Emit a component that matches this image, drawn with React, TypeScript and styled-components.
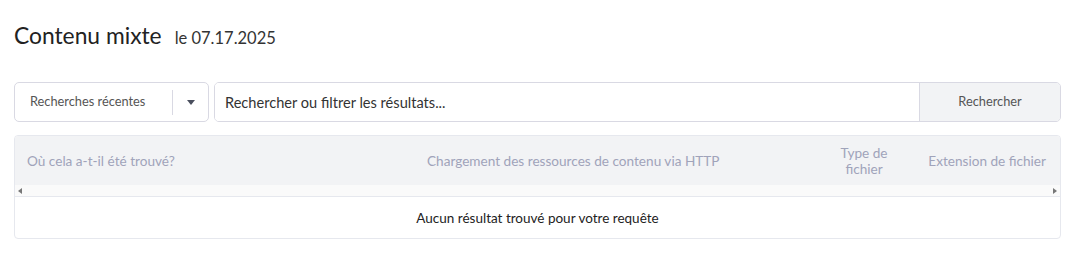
import React from "react";
import styled, { createGlobalStyle } from "styled-components";

const GlobalStyle = createGlobalStyle`
    body {
        margin: 0;
        background: #ffffff;
        font-family: Lato, "Noto Sans", sans-serif;
        color: #222222;
    }
`;

type Column = {
    label: string;
    align: "left" | "center" | "right";
};

const columns: Column[] = [
    { label: "Où cela a-t-il été trouvé?", align: "left" },
    { label: "Chargement des ressources de contenu via HTTP", align: "left" },
    { label: "Type de fichier", align: "center" },
    { label: "Extension de fichier", align: "right" },
];

export default function App() {
    return (
        <>
            <GlobalStyle />
            <Page>
                <TitleRow>
                    <Title>Contenu mixte</Title>
                    <DateLabel>le 07.17.2025</DateLabel>
                </TitleRow>

                <SearchBar>
                    <RecentSelect>
                        <SelectLabel>Recherches récentes</SelectLabel>
                        <SelectDivider />
                        <SelectArrow />
                    </RecentSelect>
                    <SearchGroup>
                        <SearchInput placeholder="Rechercher ou filtrer les résultats..." />
                        <SearchButton>Rechercher</SearchButton>
                    </SearchGroup>
                </SearchBar>

                <TableCard>
                    <HeaderRow>
                        {columns.map((col) => (
                            <HeaderCell key={col.label} $align={col.align}>
                                {col.label}
                            </HeaderCell>
                        ))}
                    </HeaderRow>
                    <ScrollTrack>
                        <ScrollArrow $dir="left" />
                        <ScrollArrow $dir="right" />
                    </ScrollTrack>
                    <EmptyRow>Aucun résultat trouvé pour votre requête</EmptyRow>
                </TableCard>
            </Page>
        </>
    );
}

const Page = styled.div`
    padding: 21px 10px 20px 14px;
`;

const TitleRow = styled.div`
    display: flex;
    align-items: baseline;
    gap: 13px;
    height: 31px;
`;

const Title = styled.h1`
    margin: 0;
    font-size: 22.8px;
    font-weight: 400;
    color: #222222;
`;

const DateLabel = styled.span`
    font-size: 16.5px;
    color: #333333;
`;

const SearchBar = styled.div`
    display: flex;
    gap: 5px;
    margin-top: 30px;
    height: 40px;
`;

const RecentSelect = styled.div`
    width: 195px;
    box-sizing: border-box;
    display: flex;
    align-items: center;
    border: 1px solid #d9d9e3;
    border-radius: 5px;
    padding: 0 0 0 15px;
`;

const SelectLabel = styled.span`
    flex: 1;
    font-size: 12.8px;
    color: #555555;
    padding-bottom: 3px;
`;

const SelectDivider = styled.span`
    width: 1px;
    height: 25px;
    background: #d9d9e3;
`;

const SelectArrow = styled.span`
    width: 35px;
    display: flex;
    justify-content: center;
    &::after {
        content: "";
        border-left: 4px solid transparent;
        border-right: 4px solid transparent;
        border-top: 5px solid #4a4f5e;
    }
`;

const SearchGroup = styled.div`
    flex: 1;
    display: flex;
    border: 1px solid #d9d9e3;
    border-radius: 5px;
    overflow: hidden;
`;

const SearchInput = styled.input`
    flex: 1;
    border: none;
    outline: none;
    padding: 0 10px;
    font-family: Lato, "Noto Sans", sans-serif;
    font-size: 14.6px;
    color: #222222;
    &::placeholder {
        color: #333333;
    }
`;

const SearchButton = styled.button`
    width: 141px;
    border: none;
    border-left: 1px solid #d9d9e3;
    background: #f2f3f5;
    font-family: Lato, "Noto Sans", sans-serif;
    font-size: 12.8px;
    color: #555555;
    padding-bottom: 3px;
`;

const TableCard = styled.div`
    margin-top: 13px;
    border: 1px solid #e6e8ee;
    border-radius: 4px;
    overflow: hidden;
`;

const HeaderRow = styled.div`
    display: grid;
    grid-template-columns: 400px 400px 100px 1fr;
    height: 49px;
    background: #f2f3f5;
    align-items: center;
`;

const HeaderCell = styled.div<{ $align: "left" | "center" | "right" }>`
    padding: 0 14px 0 12px;
    font-size: 13.6px;
    line-height: 16px;
    color: #a0a3ba;
    text-align: ${(p) => p.$align};
`;

const ScrollTrack = styled.div`
    height: 11px;
    background: #fafafa;
    border-bottom: 1px solid #e6e8ee;
    display: flex;
    justify-content: space-between;
    align-items: center;
    padding: 0 3px;
`;

const ScrollArrow = styled.span<{ $dir: "left" | "right" }>`
    width: 0;
    height: 0;
    border-top: 3px solid transparent;
    border-bottom: 3px solid transparent;
    ${(p) =>
        p.$dir === "left"
            ? "border-right: 4px solid #777;"
            : "border-left: 4px solid #777;"}
`;

const EmptyRow = styled.div`
    height: 41px;
    display: flex;
    align-items: center;
    justify-content: center;
    font-size: 13.5px;
    color: #222222;
`;
